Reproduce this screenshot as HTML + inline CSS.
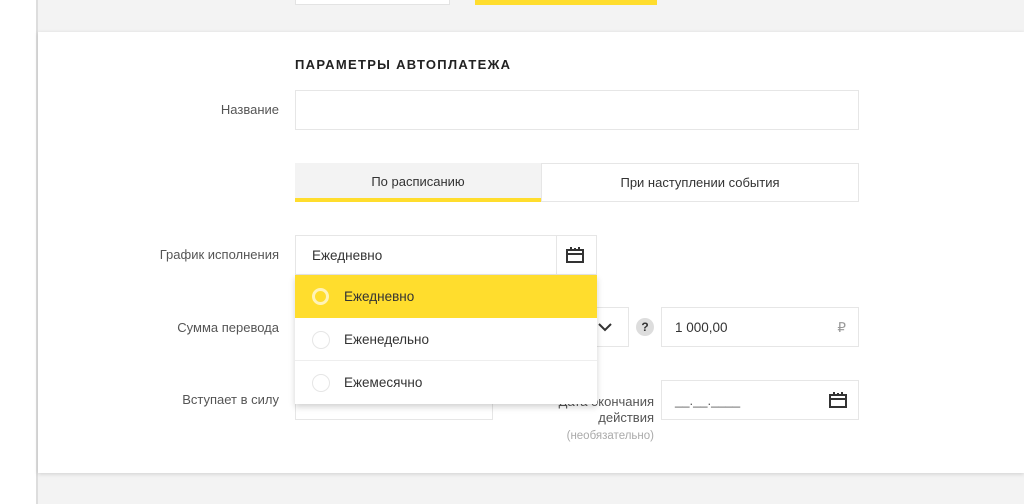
<!DOCTYPE html>
<html><head><meta charset="utf-8"><style>
*{box-sizing:border-box;margin:0;padding:0}
body{width:1024px;height:504px;overflow:hidden;background:#fff;font-family:"Liberation Sans",sans-serif;color:#333;position:relative}
.a{position:absolute}
.lbl{font-size:13px;color:#555;text-align:right}
.box{border:1px solid #e6e6e6;background:#fff}
</style></head><body>
<div class="a" style="left:36px;top:0;width:988px;height:504px;background:#f3f3f3;border-left:2px solid #ddd"></div>
<div class="a" style="left:295px;top:0;width:155px;height:5px;background:#fff;border:1px solid #e3e3e3;border-top:0"></div>
<div class="a" style="left:475px;top:0;width:182px;height:5px;background:#ffdd2d"></div>
<div class="a" style="left:38px;top:32px;width:986px;height:441px;background:#fff;box-shadow:0 1px 4px rgba(0,0,0,.15)"></div>
<div class="a" style="left:295px;top:57px;font-size:13px;font-weight:bold;letter-spacing:1.3px;color:#222">ПАРАМЕТРЫ АВТОПЛАТЕЖА</div>
<div class="a lbl" style="left:150px;top:102px;width:129px">Название</div>
<div class="a box" style="left:295px;top:90px;width:564px;height:40px"></div>
<div class="a" style="left:295px;top:163px;width:246px;height:39px;background:#f3f3f3;border-bottom:4px solid #ffdd2d;font-size:13px;text-align:center;line-height:38px">По расписанию</div>
<div class="a box" style="left:541px;top:163px;width:318px;height:39px;font-size:13px;text-align:center;line-height:37px">При наступлении события</div>
<div class="a lbl" style="left:100px;top:247px;width:179px">График исполнения</div>
<div class="a box" style="left:295px;top:235px;width:302px;height:40px;font-size:13.5px;line-height:40px;padding-left:16px">Ежедневно</div>
<div class="a" style="left:556px;top:236px;width:1px;height:38px;background:#e6e6e6"></div>
<svg class="a" style="left:565px;top:245px" width="20" height="20" viewBox="0 0 20 20" fill="none" stroke="#333" stroke-width="2"><rect x="2" y="5" width="16" height="12"/><path d="M2 9h16M6 2v4M10 3v2M14 2v4"/></svg>
<div class="a lbl" style="left:100px;top:320px;width:179px">Сумма перевода</div>
<div class="a box" style="left:580px;top:307px;width:49px;height:40px"></div>
<svg class="a" style="left:597px;top:320px" width="16" height="14" viewBox="0 0 16 14" fill="none" stroke="#333" stroke-width="2"><path d="M2 4l6 6 6-6"/></svg>
<div class="a" style="left:636px;top:318px;width:18px;height:18px;border-radius:50%;background:#ddd;font-size:12px;font-weight:bold;text-align:center;line-height:18px">?</div>
<div class="a box" style="left:661px;top:307px;width:198px;height:40px;font-size:13.5px;line-height:40px;padding-left:13px">1 000,00<span style="position:absolute;right:12px;color:#999">₽</span></div>
<div class="a lbl" style="left:100px;top:392px;width:179px">Вступает в силу</div>
<div class="a box" style="left:295px;top:380px;width:198px;height:40px"></div>
<div class="a lbl" style="left:500px;top:394px;width:154px;line-height:16px">Дата окончания<br>действия</div>
<div class="a" style="left:500px;top:430px;width:154px;text-align:right;font-size:11.5px;color:#aaa">(необязательно)</div>
<div class="a box" style="left:661px;top:380px;width:198px;height:40px;font-size:13px;line-height:40px;padding-left:13px;color:#555">__.__.____</div>
<svg class="a" style="left:828px;top:390px" width="20" height="20" viewBox="0 0 20 20" fill="none" stroke="#333" stroke-width="2"><rect x="2" y="5" width="16" height="12"/><path d="M2 9h16M6 2v4M10 3v2M14 2v4"/></svg>
<div class="a" style="left:295px;top:275px;width:302px;height:129px;background:#fff;box-shadow:0 3px 6px rgba(0,0,0,.18)">
<div style="height:43px;background:#ffdd2d;position:relative;font-size:13.5px;line-height:43px;padding-left:49px">Ежедневно<span style="position:absolute;left:17px;top:13px;width:17px;height:17px;border:3px solid #fff3b8;border-radius:50%"></span></div>
<div style="height:43px;position:relative;font-size:13.5px;line-height:43px;padding-left:49px;border-bottom:1px solid #eee">Еженедельно<span style="position:absolute;left:17px;top:13px;width:18px;height:18px;border:1px solid #e6e6e6;border-radius:50%"></span></div>
<div style="height:43px;position:relative;font-size:13.5px;line-height:43px;padding-left:49px">Ежемесячно<span style="position:absolute;left:17px;top:13px;width:18px;height:18px;border:1px solid #e6e6e6;border-radius:50%"></span></div>
</div>
</body></html>
